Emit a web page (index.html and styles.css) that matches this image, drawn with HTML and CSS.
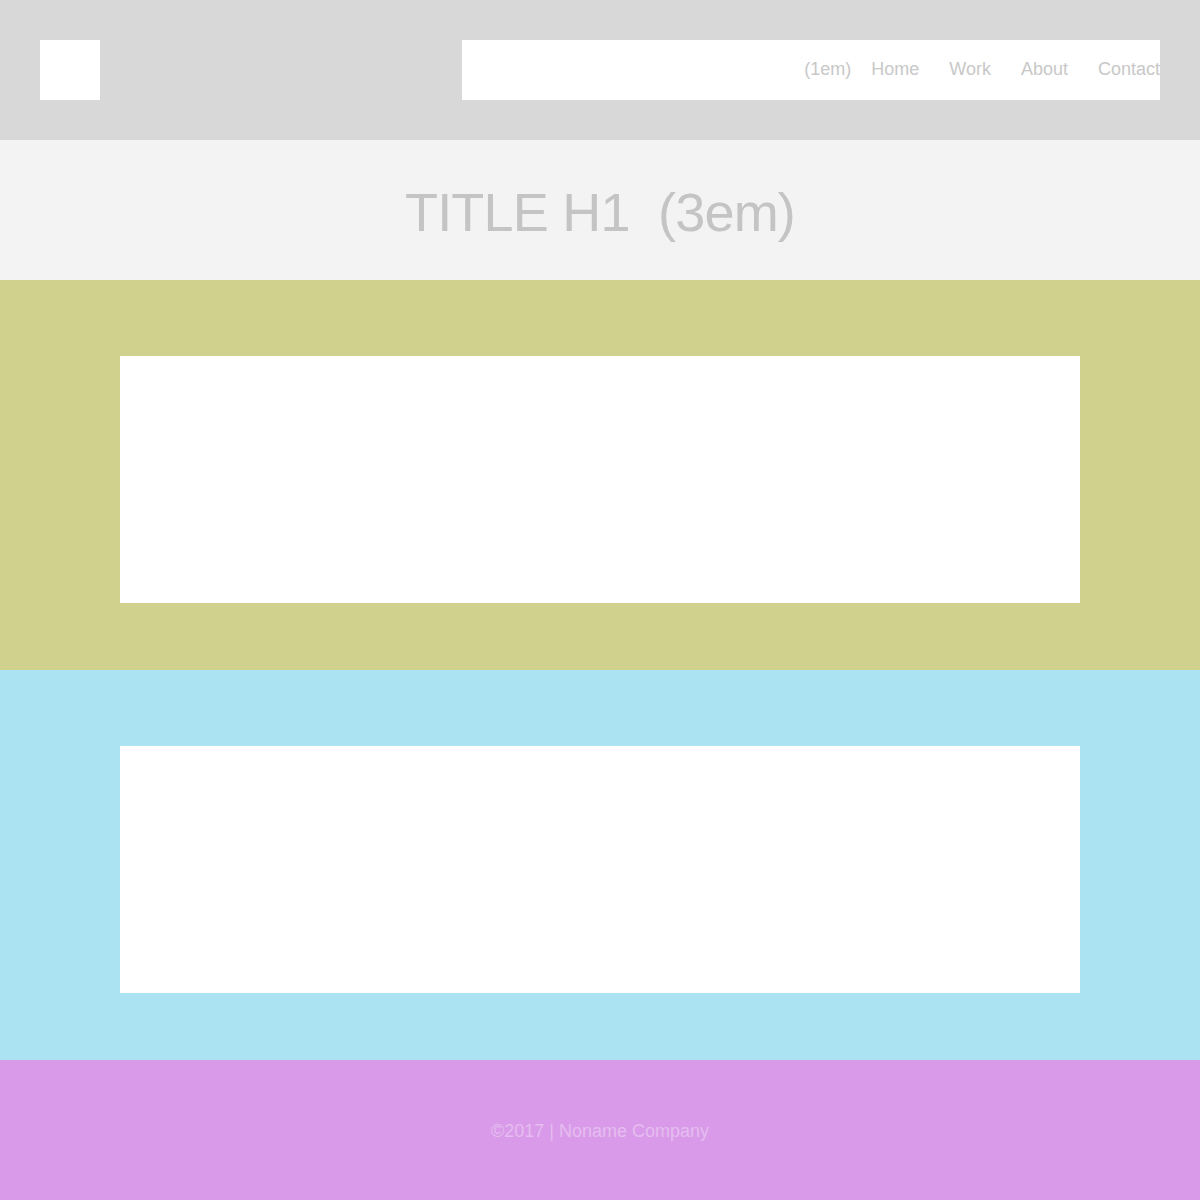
FILE: index.html
```html
<!DOCTYPE html>
<html>
	<head>
		<meta charset="UTF-8">
		<title>Noname Company</title>
		<link rel="stylesheet" href="styles.css">
	</head>
	<body>
		<header>
			<div class="logo"></div>
			<nav>
				<span class="note">(1em)</span>
				<a href="#">Home</a>
				<a href="#">Work</a>
				<a href="#">About</a>
				<a href="#">Contact</a>
			</nav>
		</header>
		<div class="title">
			<h1>TITLE H1 &nbsp;(3em)</h1>
		</div>
		<section class="olive">
			<div class="box"></div>
		</section>
		<section class="sky">
			<div class="box"></div>
		</section>
		<footer>©2017 | Noname Company</footer>
	</body>
</html>
```
FILE: styles.css
```css
body, html {
	margin: 0;
	padding: 0;
	font-family: "Liberation Sans", Arial, sans-serif;
	font-size: 18px;
}
header {
	height: 140px;
	box-sizing: border-box;
	padding: 40px;
	background: #d8d8d8;
	display: flex;
	justify-content: space-between;
}
.logo {
	width: 60px;
	height: 60px;
	background: #FFF;
}
nav {
	width: 698px;
	height: 60px;
	background: #FFF;
	display: flex;
	justify-content: flex-end;
	align-items: center;
	padding-bottom: 2px;
	box-sizing: border-box;
	color: #c8c8c8;
}
nav a {
	color: #c8c8c8;
	text-decoration: none;
	margin-left: 30px;
}
nav .note + a { margin-left: 20px; }
.title {
	height: 140px;
	background: #f3f3f3;
	display: flex;
	align-items: center;
	justify-content: center;
}
h1 {
	margin: 0;
	font-size: 3em;
	font-weight: normal;
	color: #c4c4c4;
	letter-spacing: -.8px;
	padding-top: 4px;
}
section {
	height: 390px;
	box-sizing: border-box;
	padding: 76px 120px 0;
}
.box {
	height: 247px;
	background: #FFF;
}
.olive { background: #d1d18e; }
.sky { background: #abe3f3; }
footer {
	height: 140px;
	background: #d99be9;
	display: flex;
	align-items: center;
	justify-content: center;
	color: rgba(255, 255, 255, .35);
	padding-top: 2px;
	box-sizing: border-box;
}
```
